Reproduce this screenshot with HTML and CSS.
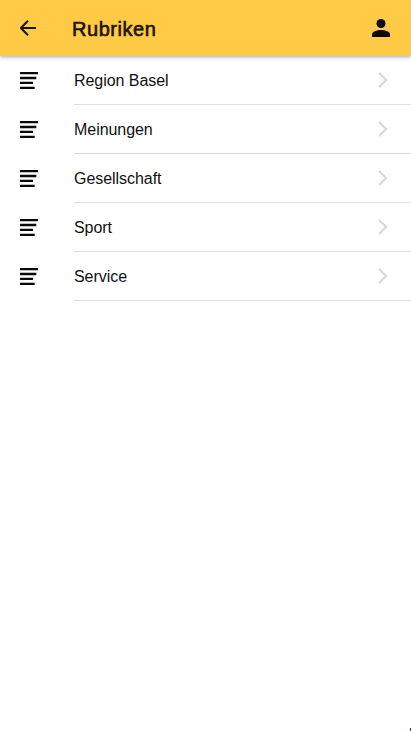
FILE: index.html
```
<!DOCTYPE html>
<html lang="de">
<head>
  <meta charset="UTF-8" />
  <meta name="viewport" content="width=device-width, initial-scale=1.0" />
  <title>Rubriken</title>
  <link rel="stylesheet" href="styles.css">
</head>
<body>
  <svg class="hidden">
    <symbol id="icon-list" viewBox="0 0 18 17">
      <path d="M0 1.2H18M0 6H16.3M0 10.8H13M0 15.8H14.7" stroke="#0a0a0a" stroke-width="2.3" />
    </symbol>
    <symbol id="icon-chevron" viewBox="0 0 10 16">
      <path d="M1 1L8.1 8L1 15" fill="none" stroke="#dadada" stroke-width="2.3" />
    </symbol>
  </svg>

  <header class="toolbar">
    <svg class="back-icon" viewBox="0 0 16 16">
      <path d="M16 8H1.5M8 .8L1 8L8 15.2" fill="none" stroke="#1c1204" stroke-width="2" />
    </svg>
    <h1 class="title">Rubriken</h1>
    <svg class="user-icon" viewBox="0 0 18 18">
      <circle cx="9" cy="4.5" r="4.5" />
      <path d="M0 18V15.5C0 12.7 4.8 11.1 9 11.1S18 12.7 18 15.5V18Z" />
    </svg>
  </header>

  <ul class="list">
    <li class="item">
      <svg class="list-icon"><use href="#icon-list" /></svg>
      <div class="item-inner"><span class="label">Region Basel</span><svg class="chevron"><use href="#icon-chevron" /></svg></div>
    </li>
    <li class="item">
      <svg class="list-icon"><use href="#icon-list" /></svg>
      <div class="item-inner"><span class="label">Meinungen</span><svg class="chevron"><use href="#icon-chevron" /></svg></div>
    </li>
    <li class="item">
      <svg class="list-icon"><use href="#icon-list" /></svg>
      <div class="item-inner"><span class="label">Gesellschaft</span><svg class="chevron"><use href="#icon-chevron" /></svg></div>
    </li>
    <li class="item">
      <svg class="list-icon"><use href="#icon-list" /></svg>
      <div class="item-inner"><span class="label">Sport</span><svg class="chevron"><use href="#icon-chevron" /></svg></div>
    </li>
    <li class="item">
      <svg class="list-icon"><use href="#icon-list" /></svg>
      <div class="item-inner"><span class="label">Service</span><svg class="chevron"><use href="#icon-chevron" /></svg></div>
    </li>
  </ul>

  <div class="corner-mark"></div>
</body>
</html>
```
FILE: styles.css
```
* {
  box-sizing: border-box;
}

body {
  margin: 0;
  min-height: 100vh;
  background: #fff;
  color: #111;
  font-family: "Helvetica Neue", "Liberation Sans", Arial, sans-serif;
  font-size: 16px;
}

.hidden {
  display: none;
}

.toolbar {
  display: flex;
  align-items: center;
  height: 56px;
  padding: 0 21px 0 20px;
  background: #ffca45;
  box-shadow: 0 1px 4px rgba(0, 0, 0, 0.35);
}

.back-icon {
  width: 16px;
  height: 16px;
}

.title {
  flex: 1;
  margin: 2px 0 0 36px;
  color: #1c1204;
  font-size: 20px;
  font-weight: 400;
  letter-spacing: 0.55px;
  line-height: 24px;
  -webkit-text-stroke: 0.6px #1c1204;
}

.user-icon {
  width: 18px;
  height: 18px;
  fill: #0d0b08;
}

.list {
  margin: 0;
  padding: 0;
  list-style: none;
}

.item {
  display: flex;
  align-items: center;
  height: 49px;
  padding-left: 20px;
}

.list-icon {
  width: 18px;
  height: 17px;
}

.item-inner {
  flex: 1;
  display: flex;
  align-items: center;
  justify-content: space-between;
  height: 49px;
  margin-left: 36px;
  padding-right: 23px;
  border-bottom: 1px solid #dedede;
}

.label {
  padding-top: 2px;
  letter-spacing: -0.05px;
}

.chevron {
  width: 10px;
  height: 16px;
}

.corner-mark {
  position: absolute;
  right: 0;
  bottom: 0;
  width: 1px;
  height: 3px;
  background: linear-gradient(#26315c 66%, #b02a3c 66%);
}
```
